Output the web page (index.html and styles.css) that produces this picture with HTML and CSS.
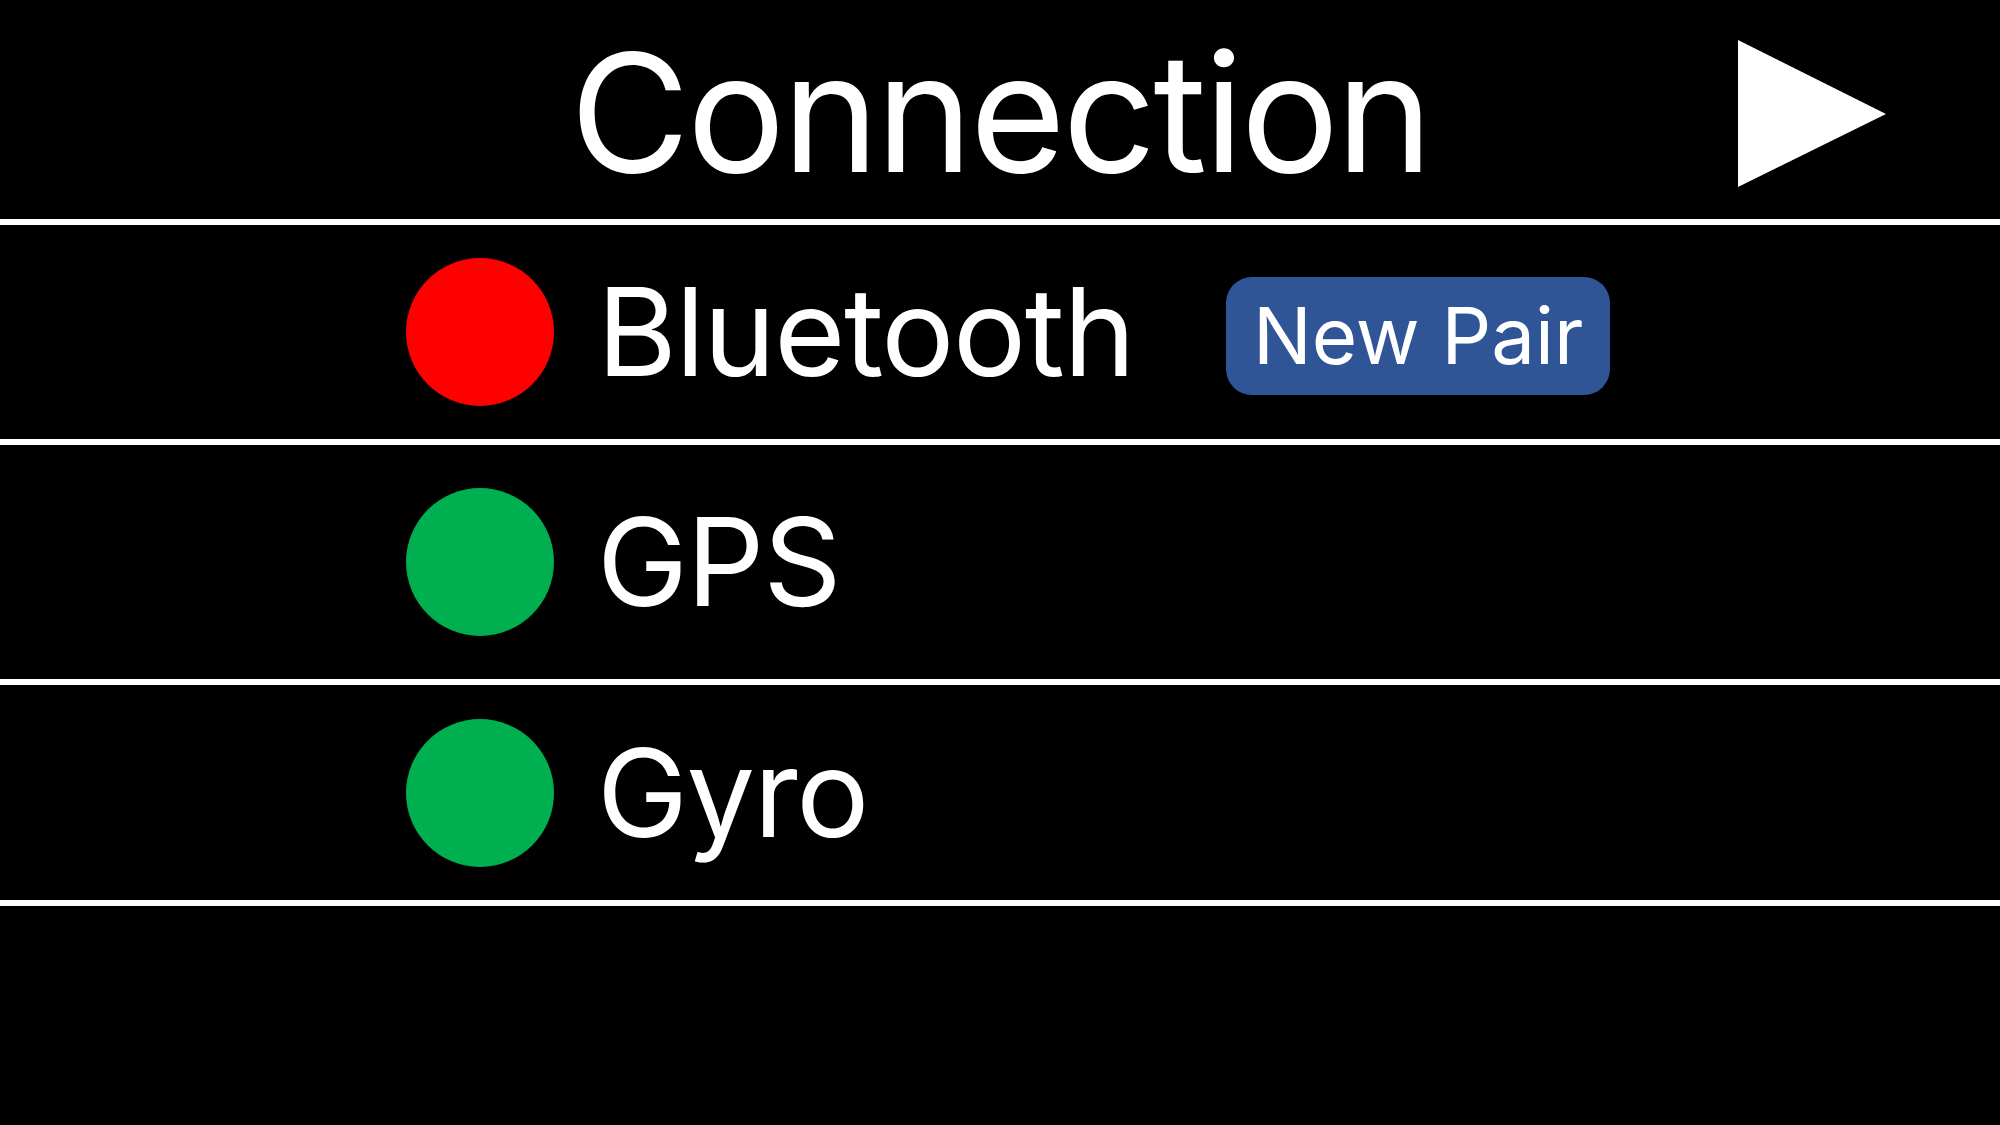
FILE: index.html
```html
<!DOCTYPE html>
<html lang="en">
<head>
<meta charset="utf-8">
<title>Connection</title>
<link rel="stylesheet" href="styles.css">
</head>
<body>
<div class="screen">
  <header class="header">
    <div class="spacer"></div>
    <h1 class="title">Connection</h1>
    <button class="next" aria-label="Next">
      <svg width="148" height="147" viewBox="0 0 148 147"><polygon points="0,0 148,74 0,147" fill="#fff"/></svg>
    </button>
  </header>
  <div class="row row-bt">
    <span class="dot dot-red"></span>
    <span class="label">Bluetooth</span>
    <button class="pair">New Pair</button>
  </div>
  <div class="row row-gps">
    <span class="dot dot-green"></span>
    <span class="label">GPS</span>
  </div>
  <div class="row row-gyro">
    <span class="dot dot-green"></span>
    <span class="label">Gyro</span>
  </div>
</div>
</body>
</html>
```
FILE: styles.css
```css
html, body {
  margin: 0;
  padding: 0;
  background: #000;
}
body {
  width: 2000px;
  height: 1125px;
  overflow: hidden;
  font-family: Inter, "Liberation Sans", Arial, sans-serif;
  color: #fff;
}
.screen {
  display: flex;
  flex-direction: column;
}
.header {
  box-sizing: border-box;
  height: 225px;
  border-bottom: 6px solid #fff;
  display: grid;
  grid-template-columns: 1fr auto 1fr;
  align-items: start;
  padding-top: 31px;
}
.title {
  margin: 0;
  font-weight: normal;
  font-size: 164px;
  line-height: 164px;
  letter-spacing: -3px;
  white-space: nowrap;
}
.next {
  justify-self: end;
  margin: 9px 114px 0 0;
  padding: 0;
  border: 0;
  background: none;
  width: 148px;
  height: 147px;
  display: block;
}
.next svg {
  display: block;
}
.row {
  box-sizing: border-box;
  border-bottom: 6px solid #fff;
  display: flex;
  align-items: center;
  gap: 43px;
  padding-left: 406px;
}
.row-bt { height: 220px; }
.row-gps { height: 240px; }
.row-gyro { height: 221px; }
.dot {
  width: 148px;
  height: 148px;
  border-radius: 50%;
  flex: none;
}
.dot-red { background: #ff0000; }
.dot-green { background: #00b050; }
.label {
  font-size: 122px;
  line-height: 122px;
  letter-spacing: -1.4px;
  white-space: nowrap;
}
.pair {
  margin-left: 49px;
  margin-top: 8px;
  width: 384px;
  height: 118px;
  border: 0;
  border-radius: 26px;
  background: #2f5597;
  color: #fff;
  font-family: Inter, "Liberation Sans", Arial, sans-serif;
  font-size: 78px;
  line-height: 78px;
  padding: 0;
  display: flex;
  align-items: center;
  justify-content: center;
}
```
